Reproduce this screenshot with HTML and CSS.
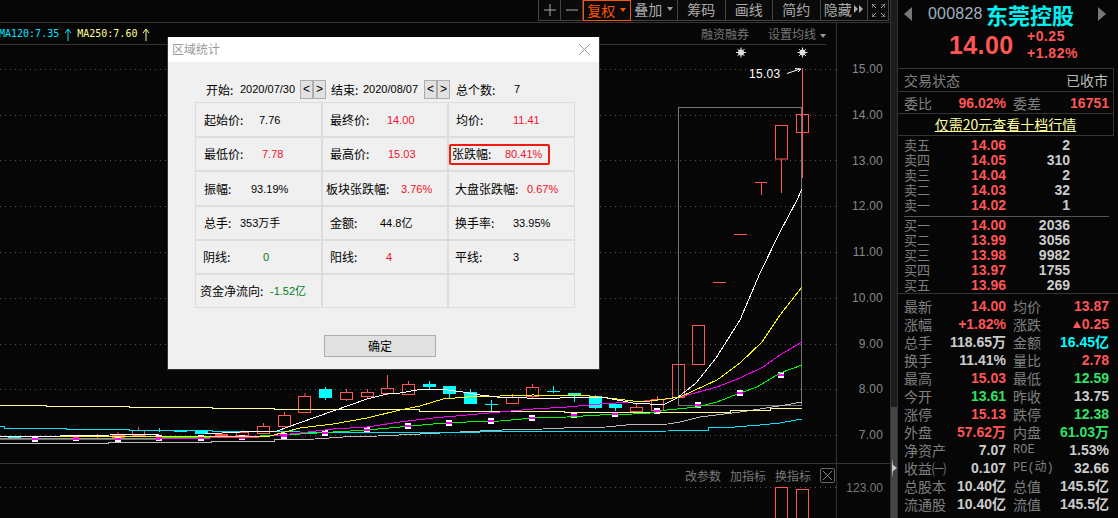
FILE: index.html
```html
<!DOCTYPE html>
<html lang="zh">
<head>
<meta charset="utf-8">
<title>区域统计</title>
<link rel="stylesheet" href="styles.css">
</head>
<body>
<div class="app">
  <div class="left">
    <div class="toolbar">
      <div class="tools">
        <button class="tool t-icon"><svg width="12" height="12" viewBox="0 0 12 12"><path d="M6 0v12M0 6h12" class="ic"/></svg></button>
        <button class="tool t-icon"><svg width="12" height="12" viewBox="0 0 12 12"><path d="M0 6h12" class="ic"/></svg></button>
        <button class="tool t-active">复权<i class="caret caret-o"></i></button>
        <button class="tool">叠加<i class="caret"></i></button>
        <button class="tool">筹码</button>
        <button class="tool">画线</button>
        <button class="tool">简约</button>
        <button class="tool">隐藏<svg width="10" height="8" viewBox="0 0 10 8" class="ff"><path d="M0 0l4 4-4 4zM5 0l4 4-4 4z" fill="#aaa"/></svg></button>
        <button class="tool t-full"><svg width="13" height="13" viewBox="0 0 13 13"><path d="M0 4V0h4M9 0h4v4M13 9v4H9M4 13H0V9M0 0l4 4M13 0L9 4M13 13L9 9M0 13l4-4" class="ic"/></svg></button>
      </div>
    </div>
    <div class="work">
      <div class="plot">
        <div class="plot-head">
          <div class="legend">
            <span class="ma-cyan">MA120:7.35</span><svg width="8" height="13" viewBox="0 0 8 13" class="ar"><path d="M4 13V1M1 5l3-4 3 4" fill="none" stroke="#00e5ff"/></svg>
            <span class="ma-yellow">MA250:7.60</span><svg width="8" height="13" viewBox="0 0 8 13" class="ar"><path d="M4 13V1M1 5l3-4 3 4" fill="none" stroke="#ffff99"/></svg>
          </div>
          <div class="head-links"><span>融资融券</span><span>设置均线<i class="caret"></i></span></div>
        </div>
        <svg class="main-chart" width="836" height="418" viewBox="0 45 836 418">
          <g class="dots">
            <path d="M0 69.5H838M0 115.5H838M0 160.5H838M0 206.5H838M0 252.5H838M0 298.5H838M0 344.5H838M0 389.5H838M0 435.5H838"/>
          </g>
          <rect class="range" x="678.5" y="107.5" width="123" height="298"/>
          <g class="dn">
            <path d="M802.5 68V178M781.5 159V193M761.5 182V195M755 182.5H767M734 234.5H747M713 282.5H726"/>
            <rect x="796.5" y="114.5" width="12" height="18"/>
            <rect x="775.5" y="125.5" width="12" height="33.500"/>
            <rect x="692.500" y="325.500" width="12" height="39"/>
            <rect x="672.500" y="364.500" width="12" height="33"/>
            <path d="M305 393V396M346.500 389V392M346.500 399V401M367.500 389V392M367.500 396V399M387.500 375V388M387.500 393V395M408.500 381V384M512.500 394V397M532.500 384V387M532.500 396V398M636.500 403V407M657.500 396V399M284.500 412V415M263.500 423V426M243 430V432M138.500 427V430M118 432V435M97.500 434V439"/>
            <rect x="298.500" y="396.500" width="12" height="16"/>
            <rect x="340.500" y="392.500" width="12" height="7"/>
            <rect x="361.500" y="392.500" width="12" height="4"/>
            <rect x="381.500" y="388.500" width="12" height="5"/>
            <rect x="402.500" y="384.500" width="12" height="10"/>
            <rect x="506.500" y="397.500" width="12" height="6"/>
            <rect x="526.500" y="387.500" width="12" height="9"/>
            <rect x="630.500" y="407.500" width="12" height="4"/>
            <rect x="651.500" y="399.500" width="12" height="11"/>
            <rect x="278.500" y="415.500" width="12" height="11"/>
            <rect x="257.500" y="426.500" width="12" height="7"/>
            <rect x="236.500" y="432.500" width="12" height="3"/>
            <rect x="215.500" y="434.500" width="12" height="1"/>
            <rect x="132.500" y="430.500" width="12" height="5"/>
            <rect x="112.500" y="435.500" width="12" height="2"/>
            <rect x="91.500" y="435.500" width="12" height="1"/>
          </g>
          <g class="up">
            <path d="M325.500 387V400M429.500 381V390M449.500 394V398M470.500 389V392M491.500 400V412M485 404.500H498M553.500 386V393M547 391.500H560M574.500 396V402M595.500 395V409M615.500 408V411M159.500 428V432"/>
            <rect x="319" y="389" width="13" height="9"/>
            <rect x="423" y="384" width="13" height="3"/>
            <rect x="443" y="386" width="13" height="8"/>
            <rect x="464" y="392" width="13" height="12"/>
            <rect x="568" y="393" width="13" height="3"/>
            <rect x="589" y="396" width="13" height="12"/>
            <rect x="609" y="404" width="13" height="4"/>
            <rect x="195" y="431" width="13" height="3"/>
            <rect x="174" y="430" width="13" height="2"/>
            <rect x="153" y="430" width="13" height="1"/>
            <rect x="8" y="437" width="13" height="1"/>
          </g>
          <g class="marks">
            <rect x="32" y="436" width="6" height="6"/><rect x="73" y="435" width="6" height="6"/><rect x="115" y="436" width="6" height="6"/><rect x="156" y="435" width="6" height="6"/><rect x="198" y="435" width="6" height="6"/><rect x="239" y="435" width="6" height="5"/><rect x="281" y="433" width="6" height="6"/><rect x="322" y="430" width="6" height="6"/><rect x="364" y="427" width="6" height="6"/><rect x="405" y="423" width="6" height="6"/><rect x="446" y="420" width="6" height="6"/><rect x="488" y="418" width="6" height="6"/><rect x="529" y="415" width="6" height="6"/><rect x="571" y="412" width="6" height="6"/><rect x="612" y="412" width="6" height="5"/><rect x="654" y="408" width="6" height="6"/><rect x="695" y="402" width="6" height="6"/><rect x="737" y="390" width="6" height="6"/><rect x="778" y="372" width="6" height="6"/>
          </g>
          <polyline class="l-gray" points="0,443 108,443 108,442 211,442 211,441 274,441 274,440 315,439 343,437 378,436 420,434 440,433 480,431 502,430 543,429 564,428 606,427 626,425 668,424 680,422 700,417 740,412 760,409 785,405 802,402"/>
          <polyline class="l-cyan" points="0,426 4,426 4,428 66,428 66,429 129,429 129,430 212,430 212,431 274,431 300,432 480,432 668,431 668,430 708,430 708,428 735,427 760,425 780,423 802,419"/>
          <polyline class="l-pale" points="0,405 46,405 46,406 129,406 129,407 212,407 212,408 274,408 274,409 419,409 419,411 564,411 564,412 730,412 730,410 770,410 770,408 802,408"/>
          <polyline class="l-green" points="0,438 160,438 260,436 300,434 367,430 400,427 433,424 467,422 500,421 533,418 567,417 600,415 633,414 650,413 667,410 697,407 717,402 740,393 757,387 780,373 802,365"/>
          <polyline class="l-mag" points="0,439 160,439 260,437 300,433 333,429 367,427 400,422 433,418 467,415 500,412 533,409 567,407 600,404 633,402 667,399 680,397 717,387 740,378 763,367 780,355 802,342"/>
          <polyline class="l-yellow" points="0,436 270,436 300,428 333,424 367,418 400,410 420,406 443,399 467,397 533,395 590,396 617,399 633,401 650,401 680,397 717,380 740,363 762,342 780,315 802,287"/>
          <polyline class="l-white" points="0,437 60,436 160,434 205,434 240,432 277,431 299,423 333,411 367,399 387,394 400,393 423,389 440,389 463,392 480,395 497,397 527,398 560,398 567,397 590,397 607,398 633,403 650,404 663,405 677,398 696,383 716,358 740,320 760,273 780,232 797,200 802,189"/>
          <path class="mark-lines" d="M32 439h6M73 438h6M115 439h6M156 438h6M198 438h6M239 438h6M281 436h6M322 433h6M364 430h6M405 426h6M446 423h6M488 421h6M529 418h6M571 415h6M612 414h6M654 411h6M695 405h6M737 393h6M778 375h6"/>
          <g class="star">
            <circle cx="741" cy="52.500" r="3"/><path d="M741 47.500v10M736 52.500h10M737.500 49l7 7M744.500 49l-7 7"/>
            <circle cx="802.500" cy="52.500" r="3"/><path d="M802.500 47.500v10M797.500 52.500h10M799 49l7 7M806 49l-7 7"/>
          </g>
          <text class="hi" x="749" y="78">15.03</text>
          <path class="hi-ar" d="M787 73.500L800 69M795 68.500l6 .5-3 3"/>
        </svg>
        <div class="sub">
          <div class="sub-tools"><span>改参数</span><span>加指标</span><span>换指标</span><span class="x-box"><svg width="9" height="9" viewBox="0 0 9 9"><path d="M0 0l9 9M9 0L0 9" class="ic2"/></svg></span></div>
          <svg class="sub-chart" width="836" height="31" viewBox="0 487 836 31">
            <path class="dots-p" d="M0 487.500H838"/>
            <g class="dn"><rect x="775.500" y="487.500" width="12" height="40"/><rect x="796.500" y="489.500" width="12" height="40"/></g>
          </svg>
        </div>
      </div>
      <div class="axis">
        <div class="axis-main">
          <span>15.00</span><span>14.00</span><span>13.00</span><span>12.00</span><span>11.00</span><span>10.00</span><span>9.00</span><span>8.00</span><span>7.00</span>
        </div>
        <div class="axis-sub"><span>123.00</span></div>
      </div>
    </div>
  </div>
  <div class="divider"><div class="div-top"></div><div class="div-bot"><svg width="5" height="20" viewBox="0 0 5 20"><path d="M0 0l1 7 4 3-4 3-1 7z" fill="#ccc"/></svg></div></div>
  <aside class="panel">
    <div class="p-head">
      <div class="title-row">
        <svg width="8" height="14" viewBox="0 0 8 14"><path d="M8 0v14L0 7z" fill="#777"/></svg>
        <span class="code">000828</span><span class="name">东莞控股</span>
        <svg width="8" height="14" viewBox="0 0 8 14"><path d="M0 0v14l8-7z" fill="#777"/></svg>
      </div>
      <div class="price-row"><span class="price">14.00</span><div class="chg"><span>+0.25</span><span>+1.82%</span></div></div>
    </div>
    <div class="p-status"><span>交易状态</span><span class="light">已收市</span></div>
    <div class="p-ratio">
      <div class="kv"><span>委比</span><b class="r">96.02%</b></div>
      <div class="kv"><span>委差</span><b class="r">16751</b></div>
    </div>
    <div class="p-promo"><span>仅需20元查看十档行情</span></div>
    <div class="book book-ask">
      <div class="lv"><span>卖五</span><b class="r">14.06</b><b>2</b></div>
      <div class="lv"><span>卖四</span><b class="r">14.05</b><b>310</b></div>
      <div class="lv"><span>卖三</span><b class="r">14.04</b><b>2</b></div>
      <div class="lv"><span>卖二</span><b class="r">14.03</b><b>32</b></div>
      <div class="lv"><span>卖一</span><b class="r">14.02</b><b>1</b></div>
    </div>
    <div class="book book-bid">
      <div class="lv"><span>买一</span><b class="r">14.00</b><b>2036</b></div>
      <div class="lv"><span>买二</span><b class="r">13.99</b><b>3056</b></div>
      <div class="lv"><span>买三</span><b class="r">13.98</b><b>9982</b></div>
      <div class="lv"><span>买四</span><b class="r">13.97</b><b>1755</b></div>
      <div class="lv"><span>买五</span><b class="r">13.96</b><b>269</b></div>
    </div>
    <div class="stats">
      <div class="q"><div class="kv"><span>最新</span><b class="r">14.00</b></div><div class="kv"><span>均价</span><b class="r">13.87</b></div></div>
      <div class="q"><div class="kv"><span>涨幅</span><b class="r">+1.82%</b></div><div class="kv"><span>涨跌</span><b class="r"><i class="tri"></i>0.25</b></div></div>
      <div class="q"><div class="kv"><span>总手</span><b>118.65万</b></div><div class="kv"><span>金额</span><b class="c">16.45亿</b></div></div>
      <div class="q"><div class="kv"><span>换手</span><b>11.41%</b></div><div class="kv"><span>量比</span><b class="r">2.78</b></div></div>
      <div class="q"><div class="kv"><span>最高</span><b class="r">15.03</b></div><div class="kv"><span>最低</span><b class="g">12.59</b></div></div>
      <div class="q"><div class="kv"><span>今开</span><b class="g">13.61</b></div><div class="kv"><span>昨收</span><b>13.75</b></div></div>
      <div class="q"><div class="kv"><span>涨停</span><b class="r">15.13</b></div><div class="kv"><span>跌停</span><b class="g">12.38</b></div></div>
      <div class="q"><div class="kv"><span>外盘</span><b class="r">57.62万</b></div><div class="kv"><span>内盘</span><b class="g">61.03万</b></div></div>
      <div class="q"><div class="kv"><span>净资产</span><b>7.07</b></div><div class="kv"><span class="mono">ROE</span><b>1.53%</b></div></div>
      <div class="q"><div class="kv"><span>收益㈠</span><b>0.107</b></div><div class="kv"><span class="mono">PE(动)</span><b>32.66</b></div></div>
      <div class="q"><div class="kv"><span>总股本</span><b>10.40亿</b></div><div class="kv"><span>总值</span><b>145.5亿</b></div></div>
      <div class="q"><div class="kv"><span>流通股</span><b>10.40亿</b></div><div class="kv"><span>流值</span><b>145.5亿</b></div></div>
    </div>
  </aside>
</div>

<section class="dialog">
  <header class="d-title"><span>区域统计</span><svg width="11" height="11" viewBox="0 0 11 11"><path d="M0 0l11 11M11 0L0 11" class="ic3"/></svg></header>
  <div class="d-range">
    <span class="w34">开始:</span><span class="w60">2020/07/30</span>
    <button class="nav">&lt;</button><button class="nav">&gt;</button>
    <span class="w32 ml5">结束:</span><span class="w61">2020/08/07</span>
    <button class="nav">&lt;</button><button class="nav">&gt;</button>
    <span class="w58 ml6">总个数:</span><span>7</span>
  </div>
  <div class="d-grid">
    <div class="cell p8"><span class="l55">起始价:</span><span>7.76</span></div>
    <div class="cell p7"><span class="l57">最终价:</span><span class="red">14.00</span></div>
    <div class="cell p7"><span class="l57">均价:</span><span class="red">11.41</span></div>

    <div class="cell p8"><span class="l58">最低价:</span><span class="red">7.78</span></div>
    <div class="cell p7"><span class="l58">最高价:</span><span class="red">15.03</span></div>
    <div class="cell p0"><div class="hl"><span class="l53">张跌幅:</span><span class="red">80.41%</span></div></div>

    <div class="cell p8"><span class="l47">振幅:</span><span>93.19%</span></div>
    <div class="cell p3"><span class="l75">板块张跌幅:</span><span class="red">3.76%</span></div>
    <div class="cell p6"><span class="l72">大盘张跌幅:</span><span class="red">0.67%</span></div>

    <div class="cell p8"><span class="l36">总手:</span><span>353万手</span></div>
    <div class="cell p7"><span class="l50">金额:</span><span>44.8亿</span></div>
    <div class="cell p6"><span class="l58">换手率:</span><span>33.95%</span></div>

    <div class="cell p7"><span class="l60">阴线:</span><span class="grn">0</span></div>
    <div class="cell p7"><span class="l56">阳线:</span><span class="red">4</span></div>
    <div class="cell p6"><span class="l58">平线:</span><span>3</span></div>

    <div class="cell p4"><span class="l70">资金净流向:</span><span class="grn">-1.52亿</span></div>
    <div class="cell"></div>
    <div class="cell"></div>
  </div>
  <div class="d-foot"><button class="ok">确定</button></div>
</section>
</body>
</html>
```
FILE: styles.css
```css
* { box-sizing: border-box; }
html, body { margin: 0; padding: 0; width: 1118px; height: 518px; overflow: hidden; background: #060606; }
body { position: relative; font-family: "Liberation Sans", "Noto Sans CJK SC", sans-serif; font-size: 12px; color: #888; }
button { font: inherit; padding: 0; margin: 0; }
.app { display: flex; width: 1118px; height: 518px; }

/* left */
.left { width: 890px; display: flex; flex-direction: column; }
.toolbar { height: 23px; border-bottom: 1px solid #333; display: flex; justify-content: flex-end; padding-right: 1px; }
.tools { display: flex; height: 21px; border: 1px solid #444; border-top: 0; }
.tool { width: 47.5px; height: 20px; background: #0a0a0a; border: 0; border-right: 1px solid #444; color: #aaa; font-size: 14px; line-height: 18px; padding-bottom: 2px; display: flex; align-items: center; justify-content: center; font-family: "Noto Sans CJK SC", sans-serif; }
.tool:last-child { border-right: 0; }
.t-icon { width: 22px; padding-bottom: 0; }
.t-full { width: 20px; padding-bottom: 0; }
.t-active { color: #ff5500; border: 1px solid #ff5500; height: 21px; }
.ic { stroke: #aaa; fill: none; }
.ic2 { stroke: #888; fill: none; }
.ic3 { stroke: #999; fill: none; }
.caret { display: inline-block; width: 0; height: 0; border: 3px solid transparent; border-top: 4px solid #999; border-bottom: 0; margin-left: 5px; vertical-align: middle; }
.caret-o { border-top-color: #ff5500; }
.head-links .caret { margin-left: 4px; }
.ff { margin-left: 2px; }

.work { flex: 1; display: flex; min-height: 0; }
.plot { width: 836px; display: flex; flex-direction: column; }
.plot-head { height: 22px; padding-top: 1px; display: flex; justify-content: space-between; align-items: center; border-bottom: 1px solid #333; margin-right: 10px; }
.legend { display: flex; align-items: center; font: 10px/14px "DejaVu Sans Mono", monospace; margin-left: -1px; }
.ma-cyan { color: #00e5ff; }
.ma-yellow { color: #ffff99; margin-left: 5px; }
.ar { margin-left: 5px; }
.head-links { display: flex; gap: 19px; color: #777; font: 12px/14px "Noto Sans CJK SC", sans-serif; }
.main-chart { display: block; overflow: visible; flex: none; }
.main-chart polyline { fill: none; stroke-width: 1; shape-rendering: crispEdges; }
.dots path, .dots-p { stroke: #555; stroke-dasharray: 1 4; fill: none; }
.range { fill: none; stroke: #777; }
.dn rect { fill: none; stroke: #ff5555; }
.dn path { stroke: #ff5555; fill: none; }
.up rect { fill: #00ffff; }
.up path { stroke: #00ffff; fill: none; }
.marks rect { fill: #fff; }
.mark-lines { stroke: #ff00ff; stroke-width: 1.5; fill: none; shape-rendering: crispEdges; }
.l-gray { stroke: #bbb; }
.l-cyan { stroke: #00e5ff; }
.l-pale { stroke: #ffff99; }
.l-green { stroke: #00ff00; }
.l-mag { stroke: #ff00ff; }
.l-yellow { stroke: #ffff00; }
.l-white { stroke: #ffffff; }
.star circle { fill: #ddd; }
.star path { stroke: #ddd; }
.hi { fill: #fff; font: 12px "Liberation Sans", sans-serif; letter-spacing: .3px; }
.hi-ar { stroke: #fff; fill: none; }
.sub { flex: 1; border-top: 1px solid #333; width: 890px; position: relative; display: flex; flex-direction: column; min-height: 0; margin-right: -54px; }
.sub-tools { height: 23px; width: 836px; display: flex; align-items: center; justify-content: flex-end; color: #777; font: 12px/14px "Noto Sans CJK SC", sans-serif; }
.sub-tools span { margin-right: 9px; }
.sub-tools .x-box { width: 15px; height: 15px; border: 1px solid #666; border-radius: 2px; display: flex; align-items: center; justify-content: center; margin: 0 1px 0 0; }
.sub-chart { display: block; overflow: hidden; flex: none; }

.axis { width: 54px; border-left: 1px solid #333; display: flex; flex-direction: column; text-align: right; padding-right: 7px; position: relative; }
.axis-main { padding-top: 39px; display: flex; flex-direction: column; gap: 31.750px; flex: none; }
.axis-main span { height: 14px; line-height: 14px; letter-spacing: .2px; }
.axis-sub { position: absolute; right: 7px; top: 458px; line-height: 14px; color: #777; }

/* divider */
.divider { width: 7px; display: flex; flex-direction: column; border-left: 1px solid #333; }
.div-top { height: 407px; background: #1c1c1c; }
.div-bot { flex: 1; background: #444; padding: 51px 0 0 1px; }
.div-bot svg { display: block; }

/* right panel */
.panel { width: 221px; border-left: 1px solid #333; font-family: "Liberation Sans", "Noto Sans CJK SC", sans-serif; font-size: 14px; display: flex; flex-direction: column; color: #808080; }
.panel span { font-family: "Noto Sans CJK SC", sans-serif; }
.panel b { color: #ccc; font-weight: 700; }
.panel .r { color: #ff5555; }
.panel .g { color: #33e066; }
.panel .c { color: #00ffff; }
.p-head { height: 68px; padding: 0 9px 0 6px; }
.title-row { display: flex; align-items: center; height: 28px; }
.title-row svg:first-child { flex: none; }
.code { margin-left: 16px; font: 16px/20px "Liberation Sans", sans-serif !important; color: #9fb0bf; letter-spacing: .2px; width: 58px; }
.name { font-size: 22px; line-height: 28px; font-weight: 700; color: #00f0f0; width: 112px; letter-spacing: 0; }
.price-row { display: flex; padding-left: 45px; height: 40px; }
.price { font: 700 25px/34px "Liberation Sans", sans-serif !important; color: #ff5555; width: 78px; letter-spacing: .4px; }
.chg { display: flex; flex-direction: column; }
.chg span { font: 700 14px/17px "Liberation Sans", sans-serif; color: #ff5555; letter-spacing: .5px; }
.p-status { height: 23px; border-top: 1px solid #333; border-right: 1px solid #333; width: 216px; display: flex; justify-content: space-between; align-items: center; padding: 0 5px 0 6px; line-height: 20px; }
.p-status .light { color: #bbb; }
.p-ratio { height: 22px; border-top: 1px solid #333; display: grid; grid-template-columns: 102px 96px; column-gap: 7px; padding-left: 6px; align-items: center; width: 216px; border-right: 1px solid #333; }
.p-promo { height: 23px; border-top: 1px solid #333; border-bottom: 1px solid #333; width: 216px; border-right: 1px solid #333; text-align: center; font-size: 14px; line-height: 21px; }
.p-promo span { color: #ffffa0; text-decoration: underline; }
.kv { display: flex; justify-content: space-between; align-items: center; line-height: 18px; height: 18px; }
.book { padding-left: 6px; }
.book-ask { padding-top: 2px; height: 80px; }
.book-bid { height: 77px; border-top: 1px solid #555; margin-left: 6px; padding-left: 0; margin-right: 9px; padding-top: 1px; }
.lv { display: grid; grid-template-columns: 30px 72px 64px; height: 15px; line-height: 15px; text-align: right; }
.panel .lv span { text-align: left; font-family: "Liberation Sans", "Noto Sans CJK SC", sans-serif; font-size: 13px; }
.stats { border-top: 1px solid #333; padding: 3px 10px 0 6px; display: flex; flex-direction: column; }
.q { display: grid; grid-template-columns: 102px 96px; column-gap: 7px; height: 18px; }
.panel .mono { font: 12px/18px "Liberation Mono", "Noto Sans CJK SC", monospace; }
.tri { display: inline-block; width: 0; height: 0; border: 4px solid transparent; border-bottom: 7px solid #ff5555; border-top: 0; margin-right: 1px; vertical-align: 1px; }

/* dialog */
.dialog { position: absolute; left: 167px; top: 37px; width: 433px; height: 333px; background: #f0f0f0; border: 1px solid #333; border-top: 0; color: #000; font-family: "Noto Sans CJK SC", sans-serif; font-size: 12px; display: flex; flex-direction: column; }
.d-title { height: 25px; background: #fff; display: flex; justify-content: space-between; align-items: center; padding: 0 9px 0 4px; color: #999; flex: none; }
.d-title span { margin-bottom: 3px; }
.d-range { height: 40px; padding: 14px 0 0 38px; display: flex; align-items: center; line-height: 19px; flex: none; }
.d-range span { white-space: nowrap; }
.w34 { width: 34px; } .w60 { width: 60px; } .w61 { width: 61px; } .w32 { width: 32px; } .w58 { width: 58px; }
.ml5 { margin-left: 5px; } .ml6 { margin-left: 6px; }
.nav { width: 13px; height: 19px; background: #e1e1e1; border: 1px solid #adadad; font-size: 12px; line-height: 15px; color: #000; font-family: "Liberation Sans", sans-serif; }
.d-grid { margin: 0 0 0 27px; width: 380px; display: grid; grid-template-columns: 125px 124px 125px; grid-template-rows: 33px 32px 33px 32px 32px 32px; gap: 2px; background: #ddd; border: 1px solid #ddd; flex: none; }
.cell { background: #f0f0f0; display: flex; align-items: center; line-height: 18px; white-space: nowrap; }
.red { color: #f0102a; } .grn { color: #007a20; }
.d-range span:nth-child(even), .cell span:last-child { font-family: "Liberation Sans", "Noto Sans CJK SC", sans-serif; font-size: 11px; }
.p0 { padding-left: 0; } .p3 { padding-left: 3px; } .p4 { padding-left: 4px; } .p6 { padding-left: 6px; } .p7 { padding-left: 7px; } .p8 { padding-left: 8px; }
.hl { display: flex; align-items: center; width: 101px; height: 21px; border: 2px solid #f01a10; border-radius: 2px; padding-left: 1px; }
.l36 { width: 36px; } .l47 { width: 47px; } .l50 { width: 50px; } .l53 { width: 53px; } .l55 { width: 55px; } .l56 { width: 56px; } .l57 { width: 57px; } .l58 { width: 58px; } .l60 { width: 60px; } .l70 { width: 70px; } .l72 { width: 72px; } .l75 { width: 75px; }
.d-foot { padding: 27px 0 0 156px; flex: none; }
.ok { width: 112px; height: 22px; background: #e1e1e1; border: 1px solid #adadad; color: #000; line-height: 20px; }
```
